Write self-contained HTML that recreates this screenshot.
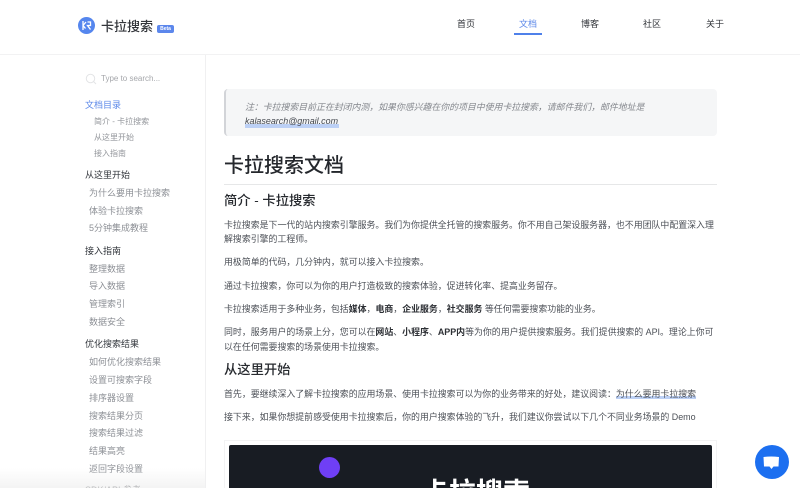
<!DOCTYPE html>
<html lang="zh">
<head>
<meta charset="utf-8">
<style>
html,body{margin:0;padding:0;background:#fff;width:800px;height:488px;overflow:hidden}
#w{width:800px;height:488px;position:relative;overflow:hidden;font-family:"Liberation Sans","Noto Sans CJK SC",sans-serif;color:#4a4f57}
.t{position:absolute;white-space:nowrap;line-height:14px}
.nav{font-size:9px;color:#2f3237;top:17px}
.h{font-size:9px;color:#33373d;left:85px}
.s{font-size:9px;color:#8d9096;left:89px}
.u{font-size:8px;color:#93969b;left:94px}
.p{font-size:8.92px;color:#4c5057;left:224px}
.p b{color:#2c2f34;font-weight:700}
.h2{font-size:13.3px;color:#26292e;left:224px;font-weight:500;line-height:18px}
</style>
</head>
<body>
<div id="w">
<div style="position:absolute;left:0;top:54px;width:800px;height:1px;background:#f2f2f3"></div>
<div style="position:absolute;left:205px;top:55px;width:1px;height:433px;background:#f0f0f1"></div>

<svg style="position:absolute;left:78px;top:17px" width="17" height="17" viewBox="0 0 17 17">
<circle cx="8.5" cy="8.5" r="8.5" fill="#5586ee"/>
<path d="M5 4v9M5 8.500L8 5M5 8.500l2.500 3M9.500 5h3v3.500h-3l3 4" fill="none" stroke="#fff" stroke-width="1.300"/>
</svg>
<div class="t" style="left:101px;top:18px;font-size:13px;line-height:18px;color:#33363b;font-weight:500">卡拉搜索</div>
<div class="t" style="left:157px;top:25px;width:17px;height:8px;background:#5c87ec;border-radius:2px;color:#fff;font-size:5px;line-height:8px;text-align:center;font-weight:700">Beta</div>

<div class="t nav" style="left:457px">首页</div>
<div class="t nav" style="left:519px;color:#5b87e8">文档</div>
<div style="position:absolute;left:514px;top:33px;width:28px;height:2px;background:#4f81ea"></div>
<div class="t nav" style="left:581px">博客</div>
<div class="t nav" style="left:643px">社区</div>
<div class="t nav" style="left:706px">关于</div>

<svg style="position:absolute;left:85px;top:73px" width="12" height="12" viewBox="0 0 12 12">
<circle cx="5.500" cy="5.500" r="4.200" fill="none" stroke="#e3e4e6" stroke-width="1"/>
<path d="M8.500 8.500L11 11" stroke="#e3e4e6" stroke-width="1"/>
</svg>
<div class="t" style="left:101px;top:72px;font-size:8px;color:#a5a7ab">Type to search...</div>

<div class="t h" style="top:98px;color:#5a87e8">文档目录</div>
<div class="t u" style="top:115px">简介 - 卡拉搜索</div>
<div class="t u" style="top:131px">从这里开始</div>
<div class="t u" style="top:147px">接入指南</div>

<div class="t h" style="top:168px">从这里开始</div>
<div class="t s" style="top:186px">为什么要用卡拉搜索</div>
<div class="t s" style="top:204px">体验卡拉搜索</div>
<div class="t s" style="top:221px">5分钟集成教程</div>

<div class="t h" style="top:244px">接入指南</div>
<div class="t s" style="top:262px">整理数据</div>
<div class="t s" style="top:279px">导入数据</div>
<div class="t s" style="top:297px">管理索引</div>
<div class="t s" style="top:315px">数据安全</div>

<div class="t h" style="top:337px">优化搜索结果</div>
<div class="t s" style="top:355px">如何优化搜索结果</div>
<div class="t s" style="top:373px">设置可搜索字段</div>
<div class="t s" style="top:391px">排序器设置</div>
<div class="t s" style="top:409px">搜索结果分页</div>
<div class="t s" style="top:426px">搜索结果过滤</div>
<div class="t s" style="top:444px">结果高亮</div>
<div class="t s" style="top:462px">返回字段设置</div>
<div class="t h" style="top:483px">SDK/API 参考</div>
<div style="position:absolute;left:0;top:468px;width:205px;height:20px;background:linear-gradient(rgba(255,255,255,0),rgba(240,240,240,.75))"></div>

<div style="position:absolute;left:224px;top:89px;width:493px;height:47px;background:#f5f6f7;border-left:2px solid #d2d4d8;border-radius:4px;box-sizing:border-box"></div>
<div class="t" style="left:245px;top:100px;font-size:8.9px;font-style:italic;color:#85888e">注：卡拉搜索目前正在封闭内测，如果你感兴趣在你的项目中使用卡拉搜索，请邮件我们，邮件地址是</div>
<div class="t" style="left:245px;top:114px;font-size:8.95px;font-style:italic;color:#43474e;background:linear-gradient(transparent 70%,#bcd0f5 70%);padding:0 1px 0 0">kalasearch@gmail.com</div>

<div class="t" style="left:224px;top:152px;font-size:20px;line-height:28px;color:#24272c;font-weight:500">卡拉搜索文档</div>
<div style="position:absolute;left:224px;top:184px;width:493px;height:1px;background:#e6e7e8"></div>

<div class="t h2" style="top:192px">简介 - 卡拉搜索</div>
<div class="t p" style="top:218px">卡拉搜索是下一代的站内搜索引擎服务。我们为你提供全托管的搜索服务。你不用自己架设服务器，也不用团队中配置深入理</div>
<div class="t p" style="top:232px">解搜索引擎的工程师。</div>
<div class="t p" style="top:255px">用极简单的代码，几分钟内，就可以接入卡拉搜索。</div>
<div class="t p" style="top:279px">通过卡拉搜索，你可以为你的用户打造极致的搜索体验，促进转化率、提高业务留存。</div>
<div class="t p" style="top:302px">卡拉搜索适用于多种业务，包括<b>媒体</b>，<b>电商</b>，<b>企业服务</b>，<b>社交服务</b> 等任何需要搜索功能的业务。</div>
<div class="t p" style="top:325px">同时，服务用户的场景上分，您可以在<b>网站</b>、<b>小程序</b>、<b>APP内</b>等为你的用户提供搜索服务。我们提供搜索的 API。理论上你可</div>
<div class="t p" style="top:340px">以在任何需要搜索的场景使用卡拉搜索。</div>
<div class="t h2" style="top:361px">从这里开始</div>
<div class="t p" style="top:387px">首先，要继续深入了解卡拉搜索的应用场景、使用卡拉搜索可以为你的业务带来的好处，建议阅读：<span style="background:linear-gradient(transparent 72%,#bcd0f5 72%)">为什么要用卡拉搜索</span></div>
<div class="t p" style="top:410px">接下来，如果你想提前感受使用卡拉搜索后，你的用户搜索体验的飞升，我们建议你尝试以下几个不同业务场景的 Demo</div>

<div style="position:absolute;left:224px;top:440px;width:493px;height:48px;border:1px solid #f3f3f4;border-bottom:0;box-sizing:border-box"></div>
<div style="position:absolute;left:229px;top:445px;width:483px;height:43px;background:#181c23;border-radius:2px 2px 0 0;overflow:hidden">
<div style="position:absolute;left:90px;top:12px;width:21px;height:21px;border-radius:50%;background:#6f3ff5"></div>
<div class="t" style="left:193px;top:30px;font-size:27px;line-height:36px;color:#fff;font-weight:700">卡拉搜索</div>
</div>

<div style="position:absolute;left:755px;top:445px;width:34px;height:34px;border-radius:50%;background:#1c6ff0"></div>
<svg style="position:absolute;left:762px;top:454px" width="20" height="18" viewBox="0 0 20 18">
<path d="M1.500 3Q9 2 17 3L16.500 12.500H11.500L9.500 15L7.500 12.500H2Z" fill="#fff"/>
</svg>
</div>
</body>
</html>
